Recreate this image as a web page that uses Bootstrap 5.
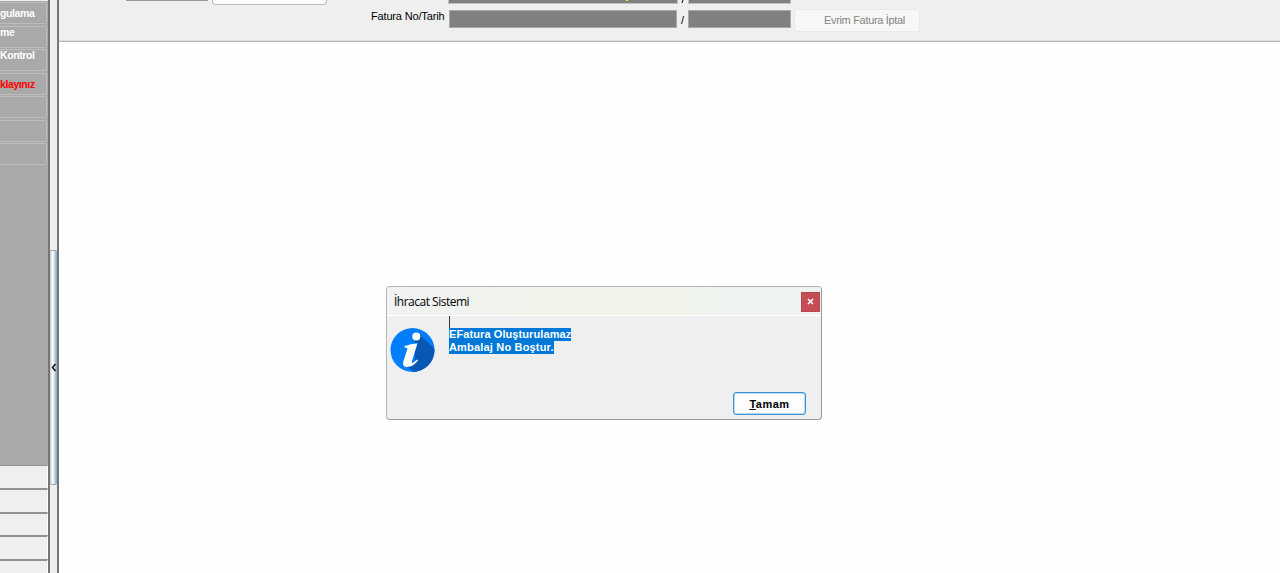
<!DOCTYPE html>
<html lang="tr">
<head>
    <meta charset="UTF-8">
    <meta name="viewport" content="width=device-width, initial-scale=1.0">
    <title>İhracat Sistemi</title>
    <link href="https://cdn.jsdelivr.net/npm/bootstrap@5.3.0/dist/css/bootstrap.min.css" rel="stylesheet">
    <style>
        body { font-family: "Liberation Sans", Arial, sans-serif; font-size: 11px; line-height: 13px; color: #000; background: #fefefe; }
        .side-panel { width: 48px; background: #a9a9a9; }
        .side-links { border-top: 1px solid #eee; padding-top: 1px; gap: 1.5px; }
        .side-link { width: 47px; height: 22px; border: 1px solid #bdbdbd; border-left: 0; border-radius: 0 2px 2px 0; color: #fff; font-size: 10.5px; font-weight: bold; white-space: nowrap; }
        .side-link span { display: block; letter-spacing: -.4px; }
        .side-link.text-alert { color: #f00; }
        .shift-up span { margin-top: -1px; }
        .side-group { height: 23.5px; background: #efefef; border-top: 2px solid #929292; border-right: 1px solid #fff; }
        .side-group:first-child { border-top-width: 1px; }
        .splitter { width: 11px; background: #efefef; border-left: 2px solid #757575; border-right: 2px solid #757575; padding-top: 250px; }
        .splitter-grip { height: 235px; border: 1px solid #a0a0a0; border-width: 1px 0; border-radius: 2px; background: linear-gradient(90deg, #d0d0d0 0 1px, #fff 2px 3px, #d8e9f4 4px, #a9cde4 5px, #93a9b8 7px); }
        .tool-area { height: 42px; background: #efefef; border-bottom: 1px solid #b8b8b8; box-shadow: inset 0 -1px #dcdcdc; }
        .top-row { height: 5px; }
        .field-end { width: 82px; height: 1px; margin-left: 67px; background: #999; }
        .blank-btn { width: 115px; height: 5px; margin-left: 4px; background: #fdfdfd; border: 1px solid #bbb; border-top: 0; border-radius: 0 0 4px 4px; }
        .dark-field { height: 18px; background: #808080; border: 1px solid #aaa; }
        .dark-tail { height: 4px; border-top: 0; border-color: #c0c0c0; }
        .yellow-tick { width: 2px; height: 1px; margin-left: 177px; background: #ff0; }
        .no-field { width: 228px; }
        .date-field { width: 103px; }
        .invoice-row { padding: 5px 0 0 312px; }
        .invoice-label { width: 78px; letter-spacing: -.16px; white-space: nowrap; }
        .slash { width: 11px; text-align: center; }
        .cancel-btn { width: 126px; height: 23px; margin: -1px 0 0 3px; padding: 0 14px 0 0; background: #f7f7f7; border: 1px solid #e9e9e9; border-radius: 3px; font-size: 11px; line-height: 19px; letter-spacing: -.32px; color: #858585; text-align: right; }
        .msg-window { left: 386px; top: 286px; width: 436px; height: 134px; background: #efefef; border: 1px solid #b5b5b5; border-right-color: #999; border-bottom-color: #999; border-radius: 4px; }
        .msg-title { height: 29px; padding-left: 7px; border-bottom: 1px solid #fff; border-radius: 3px 3px 0 0; background: linear-gradient(90deg, #f0f2f4, #f1f4eb 35%, #f1f4eb 68%, #eef3f2 80%); font-family: "Open Sans", "Noto Sans", sans-serif; font-size: 12px; letter-spacing: -.5px; }
        .close-btn { width: 19px; height: 20px; margin: 1px 1px 0 0; background: #c44e53; border: 1px solid #b7484d; }
        .msg-icon { width: 45px; height: 45px; margin: 12px 0 0 3px; }
        .msg-text { margin-left: 14px; font-weight: bold; line-height: 12px; }
        .msg-text mark { display: table; height: 13px; padding: 0; line-height: 13px; background: #0078d7; color: #fff; }
        .caret { width: 1px; height: 12px; background: #333; }
        .line-one { letter-spacing: .09px; }
        .line-two { letter-spacing: .18px; }
        .ok-btn { width: 73px; height: 23px; margin-right: 15px; padding: 0; background: #fdfdfd; border: 1px solid #3b93d3; box-shadow: inset 0 0 0 .5px #76b7e6; border-radius: 3px; font-size: 11px; font-weight: bold; line-height: 22px; letter-spacing: .5px; }
    </style>
</head>
<body class="overflow-hidden">
<div class="d-flex vh-100">
    <aside class="side-panel d-flex flex-column justify-content-between overflow-hidden flex-shrink-0">
        <div class="side-links d-flex flex-column">
            <div class="side-link pt-1"><span>gulama</span></div>
            <div class="side-link shift-up"><span>me</span></div>
            <div class="side-link shift-up"><span>Kontrol</span></div>
            <div class="side-link text-alert pt-1"><span>klayınız</span></div>
            <div class="side-link"></div>
            <div class="side-link"></div>
            <div class="side-link"></div>
        </div>
        <div class="side-groups">
            <div class="side-group"></div>
            <div class="side-group"></div>
            <div class="side-group"></div>
            <div class="side-group"></div>
            <div class="side-group" style="height: 14.3px"></div>
        </div>
    </aside>

    <div class="splitter flex-shrink-0">
        <div class="splitter-grip d-flex align-items-center">
            <svg width="7" height="9" viewBox="0 0 7 9"><path d="M5.500 1 2.500 4.500 5.500 8" fill="none" stroke="#111" stroke-width="1.5"/></svg>
        </div>
    </div>

    <main class="flex-grow-1">
        <div class="tool-area">
            <div class="top-row d-flex">
                <div class="field-end"></div>
                <div class="blank-btn"></div>
                <div class="dark-field dark-tail no-field" style="width: 230px; margin-left: 121px"><div class="yellow-tick"></div></div>
                <svg width="10" height="4" viewBox="0 0 10 4"><path d="M5 0 4 3" stroke="#000"/></svg>
                <div class="dark-field dark-tail date-field"></div>
            </div>
            <div class="invoice-row d-flex">
                <label class="invoice-label">Fatura No/Tarih</label>
                <div class="dark-field no-field"></div>
                <div class="slash pt-1">/</div>
                <div class="dark-field date-field"></div>
                <button class="cancel-btn" disabled>Evrim Fatura İptal</button>
            </div>
        </div>
    </main>
</div>

<!-- Bilgi penceresi -->
<div class="msg-window position-absolute d-flex flex-column" role="dialog">
    <div class="msg-title d-flex align-items-center justify-content-between">
        <span>İhracat Sistemi</span>
        <button class="close-btn p-0 d-flex align-items-center justify-content-center" aria-label="Kapat">
            <svg width="7" height="7" viewBox="0 0 7 7"><path d="M1 1 6 6M6 1 1 6" stroke="#fff" stroke-width="1.5"/></svg>
        </button>
    </div>
    <div class="d-flex flex-grow-1">
        <svg class="msg-icon" viewBox="0 0 45 45">
            <defs><clipPath id="disc"><circle cx="22.5" cy="22" r="22"/></clipPath></defs>
            <circle cx="22.5" cy="22" r="22" fill="#007efc"/>
            <path clip-path="url(#disc)" d="M29 5.500 50 26.500V50H30L17 38 25 34 25 12Z" fill="#0757b5"/>
            <circle cx="26.300" cy="8.500" r="4" fill="#fff"/>
            <path d="M14.500 18C18.500 16.800 23 15.500 27.500 15.200L22 33Q21.200 35.800 23.500 34.500L27 31.500 28 32.300C25 36.500 21.500 39 17 39 13.300 39 12.500 36.300 13.500 33L17.200 21.500Q18 19.300 14.500 19.500Z" fill="#fff"/>
        </svg>
        <div class="msg-text">
            <div class="caret"></div>
            <mark class="line-one">EFatura Oluşturulamaz</mark>
            <mark class="line-two">Ambalaj No Boştur.</mark>
        </div>
    </div>
    <div class="d-flex justify-content-end pb-1">
        <button class="ok-btn"><u>T</u>amam</button>
    </div>
</div>

<script src="https://cdn.jsdelivr.net/npm/bootstrap@5.3.0/dist/js/bootstrap.bundle.min.js"></script>
</body>
</html>
